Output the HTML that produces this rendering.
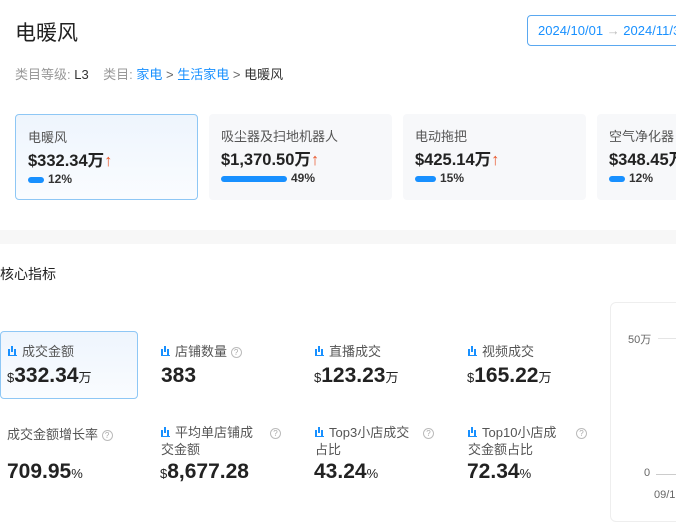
<!DOCTYPE html>
<html><head><meta charset="utf-8"><style>
*{margin:0;padding:0;box-sizing:border-box}
body{width:676px;height:507px;overflow:hidden;background:#fff;font-family:"Liberation Sans","Noto Sans CJK SC",sans-serif;color:#222;position:relative}
.a{position:absolute;white-space:nowrap}
.card{position:absolute;top:114px;height:86px;width:183px;background:#f7f8fa;border-radius:4px}
.card.sel{background:linear-gradient(#eef5fd,#fafcff);border:1px solid #8ec7f5}
.cn{position:absolute;left:12px;top:12px;font-size:13px;color:#555}
.cv{position:absolute;left:12px;top:32px;font-size:16.5px;font-weight:bold;color:#222}
.cv i{font-style:normal;color:#e8562a;font-weight:bold}
.bar{position:absolute;left:12px;top:62px;height:6px;background:#1890ff;border-radius:3px}
.pc{position:absolute;top:57px;font-size:12px;font-weight:bold;color:#333}
.ml{font-size:13px;color:#555}
.ic{display:inline-block;width:9px;height:10px;border-bottom:1px solid #1890ff;position:relative;margin-right:5px}
.ic:before{content:"";position:absolute;left:0;bottom:0;width:2px;height:6px;background:#1890ff;box-shadow:3px -3px 0 0 #1890ff,6px 0 0 #1890ff}
.mv{font-size:21px;font-weight:bold;color:#222}
.mv s{text-decoration:none;font-size:13px;font-weight:normal}
.q{display:inline-block;width:11px;height:11px;border:1px solid #bbb;border-radius:50%;font-size:8px;line-height:9px;text-align:center;color:#aaa;vertical-align:1px}
</style></head><body>
<div class="a" style="left:15px;top:17px;font-size:21px;color:#222">电暖风</div>
<div class="a" style="left:527px;top:15px;width:170px;height:31px;border:1px solid #5aa8f0;border-radius:4px;font-size:13px;color:#1890ff;padding:7px 0 0 10px">2024/10/01 <span style="color:#bbb">→</span> 2024/11/30</div>
<div class="a" style="left:15px;top:64px;font-size:13px;color:#999">类目等级: <span style="color:#333">L3</span>&nbsp;&nbsp;&nbsp;&nbsp;类目: <span style="color:#1890ff">家电</span> <span style="color:#666">&gt;</span> <span style="color:#1890ff">生活家电</span> <span style="color:#666">&gt;</span> <span style="color:#333">电暖风</span></div>

<div class="card sel" style="left:15px"><div class="cn">电暖风</div><div class="cv">$332.34万<i>↑</i></div><div class="bar" style="width:16px"></div><div class="pc" style="left:32px">12%</div></div>
<div class="card" style="left:209px"><div class="cn">吸尘器及扫地机器人</div><div class="cv">$1,370.50万<i>↑</i></div><div class="bar" style="width:66px"></div><div class="pc" style="left:82px">49%</div></div>
<div class="card" style="left:403px"><div class="cn">电动拖把</div><div class="cv">$425.14万<i>↑</i></div><div class="bar" style="width:21px"></div><div class="pc" style="left:37px">15%</div></div>
<div class="card" style="left:597px"><div class="cn">空气净化器</div><div class="cv">$348.45万<i>↑</i></div><div class="bar" style="width:16px"></div><div class="pc" style="left:32px">12%</div></div>

<div class="a" style="left:0;top:230px;width:676px;height:14px;background:#f7f7f7"></div>
<div class="a" style="left:0;top:264px;font-size:14px;color:#222">核心指标</div>

<div class="a" style="left:0;top:331px;width:138px;height:68px;border:1px solid #8ec7f5;border-radius:4px;background:linear-gradient(#eef5fd,#fafcff)"></div>
<div class="a ml" style="left:8px;top:341px"><span class="ic"></span>成交金额</div>
<div class="a mv" style="left:7px;top:364px"><s>$</s>332.34<s>万</s></div>
<div class="a ml" style="left:161px;top:341px"><span class="ic"></span>店铺数量 <span class="q">?</span></div>
<div class="a mv" style="left:161px;top:364px">383</div>
<div class="a ml" style="left:315px;top:341px"><span class="ic"></span>直播成交</div>
<div class="a mv" style="left:314px;top:364px"><s>$</s>123.23<s>万</s></div>
<div class="a ml" style="left:468px;top:341px"><span class="ic"></span>视频成交</div>
<div class="a mv" style="left:467px;top:364px"><s>$</s>165.22<s>万</s></div>

<div class="a ml" style="left:7px;top:424px">成交金额增长率 <span class="q">?</span></div>
<div class="a mv" style="left:7px;top:460px">709.95<s>%</s></div>
<div class="a ml" style="left:161px;top:424px;line-height:17px"><span class="ic"></span>平均单店铺成<br>交金额</div>
<div class="a" style="left:270px;top:424px"><span class="q">?</span></div>
<div class="a mv" style="left:160px;top:460px"><s>$</s>8,677.28</div>
<div class="a ml" style="left:315px;top:424px;line-height:17px"><span class="ic"></span>Top3小店成交<br>占比</div>
<div class="a" style="left:423px;top:424px"><span class="q">?</span></div>
<div class="a mv" style="left:314px;top:460px">43.24<s>%</s></div>
<div class="a ml" style="left:468px;top:424px;line-height:17px"><span class="ic"></span>Top10小店成<br>交金额占比</div>
<div class="a" style="left:576px;top:424px"><span class="q">?</span></div>
<div class="a mv" style="left:467px;top:460px">72.34<s>%</s></div>

<div class="a" style="left:610px;top:302px;width:80px;height:220px;border:1px solid #eee;border-radius:6px"></div>
<div class="a" style="left:628px;top:331px;font-size:11px;color:#666">50万</div>
<div class="a" style="left:658px;top:338px;width:20px;height:1px;background:#e5e5e5"></div>
<div class="a" style="left:644px;top:467px;font-size:11px;color:#666">0</div>
<div class="a" style="left:656px;top:474px;width:20px;height:1px;background:#ccc"></div>
<div class="a" style="left:654px;top:489px;font-size:11px;color:#666">09/1</div>
</body></html>
